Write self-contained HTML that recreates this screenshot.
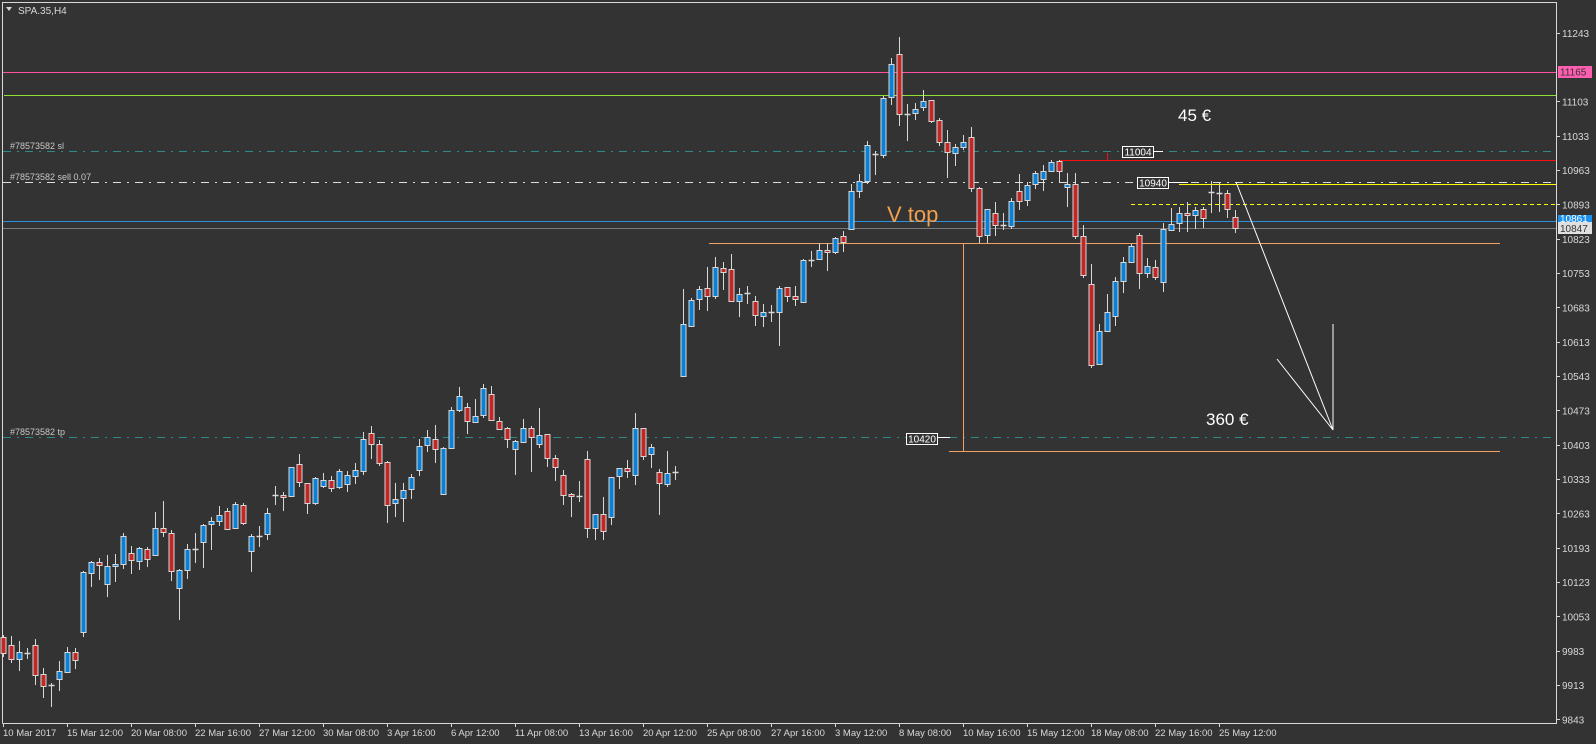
<!DOCTYPE html>
<html><head><meta charset="utf-8">
<style>
html,body{margin:0;padding:0;background:#333333;width:1596px;height:744px;overflow:hidden}
svg{display:block}
text{font-family:"Liberation Sans",sans-serif}
</style></head>
<body>
<svg id="c" width="1596" height="744" xmlns="http://www.w3.org/2000/svg">
<rect width="1596" height="744" fill="#333333"/>
<!-- frame -->
<path d="M2.5 723.5 V2.5 H1556.5 V723.5 H2.5" fill="none" stroke="#d8d8d8" stroke-width="1"/>
<!-- title -->
<path d="M6 7 L12 7 L9 11 Z" fill="#d8d8d8"/>
<text x="18" y="14" font-size="10" fill="#d8d8d8">SPA.35,H4</text>
<!-- horizontal lines -->
<line x1="3" y1="72.5" x2="1556" y2="72.5" stroke="#ff4fa0" stroke-width="1"/>
<line x1="4" y1="95.5" x2="1556" y2="95.5" stroke="#8fe030" stroke-width="1"/>
<line x1="3" y1="151.5" x2="1556" y2="151.5" stroke="#2e8a8a" stroke-width="1" stroke-dasharray="8,6,2,6"/>
<line x1="3" y1="182.5" x2="1556" y2="182.5" stroke="#dddddd" stroke-width="1" stroke-dasharray="8,6,2,6"/>
<line x1="3" y1="437.5" x2="1556" y2="437.5" stroke="#2e8a8a" stroke-width="1" stroke-dasharray="8,6,2,6"/>
<line x1="1059" y1="160.5" x2="1556" y2="160.5" stroke="#ff1010" stroke-width="1"/>
<line x1="1107.5" y1="153" x2="1107.5" y2="160" stroke="#ff1010" stroke-width="1"/>
<line x1="1179" y1="184.5" x2="1556" y2="184.5" stroke="#ffff00" stroke-width="1"/>
<line x1="1131" y1="204.5" x2="1556" y2="204.5" stroke="#ffff00" stroke-width="1" stroke-dasharray="4,3"/>
<line x1="3" y1="221.5" x2="1556" y2="221.5" stroke="#2a90e0" stroke-width="1"/>
<line x1="3" y1="228.5" x2="1556" y2="228.5" stroke="#7a7a7a" stroke-width="1"/>
<line x1="709" y1="243.5" x2="1500" y2="243.5" stroke="#f0a060" stroke-width="1"/>
<line x1="963.5" y1="243" x2="963.5" y2="451" stroke="#f0a060" stroke-width="1"/>
<line x1="949" y1="451.5" x2="1500" y2="451.5" stroke="#f0a060" stroke-width="1"/>
<!-- left labels -->
<text x="10" y="149" font-size="9" fill="#c8c8c8">#78573582 sl</text>
<text x="10" y="180" font-size="9" fill="#c8c8c8">#78573582 sell 0.07</text>
<text x="10" y="435" font-size="9" fill="#c8c8c8">#78573582 tp</text>
<g id="candles"></g>
<!-- price boxes -->
<line x1="1153" y1="151.5" x2="1163" y2="151.5" stroke="#fff"/>
<rect x="1122.5" y="146.5" width="31" height="11" fill="#333" stroke="#fff"/>
<text x="1138" y="155.5" font-size="10" fill="#fff" text-anchor="middle">11004</text>
<line x1="1169" y1="182.5" x2="1188" y2="182.5" stroke="#fff"/>
<rect x="1137.5" y="177.5" width="31" height="11" fill="#333" stroke="#fff"/>
<text x="1153" y="186.5" font-size="10" fill="#fff" text-anchor="middle">10940</text>
<line x1="938" y1="437.5" x2="950" y2="437.5" stroke="#fff"/>
<rect x="906.5" y="433.5" width="31" height="11" fill="#333" stroke="#fff"/>
<text x="922" y="442.5" font-size="10" fill="#fff" text-anchor="middle">10420</text>
<!-- annotations -->
<text x="887" y="222" font-size="22" fill="#f0a050">V top</text>
<text x="1178" y="121" font-size="17" fill="#ffffff">45 €</text>
<text x="1206" y="425" font-size="17" fill="#ffffff">360 €</text>
<polyline points="1236,182 1333,430 1277,359" fill="none" stroke="#ffffff" stroke-width="1"/>
<line x1="1333" y1="430" x2="1333" y2="324" stroke="#ffffff" stroke-width="1"/>
<g id="axis"></g>
<!-- right tags -->
<rect x="1558" y="66" width="34" height="12" fill="#ff5fb0"/>
<text x="1560" y="75.5" font-size="10" fill="#333">11165</text>
<rect x="1558" y="215" width="34" height="9" fill="#1a90f0"/>
<text x="1560" y="222" font-size="10" fill="#fff">10861</text>
<rect x="1558" y="222" width="34" height="12" fill="#e0e0e0"/>
<text x="1560" y="232" font-size="10" fill="#333">10847</text>
</svg>
<script>
var D=[
"r 637 653 635 657","r 645 659 636 663","b 652 659 641 671","d 653 653 648 659","r 645 675 639 685","r 674 686 668 698","d 685 685 683 707","b 671 679 661 691","b 652 672 647 673","r 652 660 648 669",
"b 572 632 571 637","b 562 573 561 587","r 562 565 558 580","b 566 584 555 597","b 564 566 554 582","b 536 564 533 569","r 553 560 546 574","b 548 561 547 570","r 549 559 547 567","b 528 555 512 555",
"r 528 532 501 537","r 533 571 530 581","b 570 588 569 620","b 549 570 544 579","d 549 549 533 563","b 525 542 524 568","b 521 524 517 550","b 515 521 506 526","r 511 529 508 530","b 504 528 502 528",
"r 505 523 503 525","b 536 551 534 572","d 536 536 526 547","b 513 534 508 540","d 495 495 486 505","r 495 497 492 511","b 467 496 467 497","r 464 482 454 487","r 483 503 483 514","b 478 503 477 505",
"b 480 486 473 488","r 480 488 476 492","b 471 487 469 489","b 475 484 471 492","b 470 476 463 484","b 439 471 432 475","r 433 444 426 459","r 444 463 440 466","r 462 505 461 523","b 499 503 483 517",
"b 490 498 483 522","b 477 489 474 499","b 446 470 439 476","b 437 445 430 452","r 439 449 425 463","b 448 494 447 494","b 410 448 407 448","b 396 410 387 412","r 407 421 403 434","b 416 422 399 423",
"b 388 415 384 418","r 394 420 386 420","r 421 429 417 430","r 428 439 427 448","b 441 449 440 475","b 428 442 419 443","r 428 437 426 472","b 435 444 408 448","r 434 458 434 467","r 458 467 455 481",
"r 475 495 470 505","r 494 496 493 517","d 496 496 481 502","r 459 528 451 538","b 514 528 514 540","r 514 531 497 540","b 477 517 477 525","b 468 476 468 489","r 468 471 460 478","b 428 475 413 485",
"r 428 456 428 460","b 447 454 444 468","r 472 483 469 515","b 473 484 451 487","d 472 472 466 480","b 324 376 289 376","b 300 326 298 327","b 289 299 286 310","r 288 296 267 311","b 267 296 257 299",
"r 268 272 262 290","r 269 301 254 302","b 294 301 288 317","d 293 293 286 304","r 301 315 296 326","b 312 316 304 327","d 312 312 305 322","b 288 312 286 346","r 287 296 287 302","r 296 299 286 306",
"b 260 302 259 303","d 260 260 251 267","b 250 259 243 260","r 250 252 243 271","b 238 252 237 254","r 236 242 231 252","b 191 229 184 230","b 181 191 174 198","b 145 181 141 184","d 154 154 151 175",
"b 98 155 96 158","b 64 97 58 105","r 54 114 37 126","d 114 114 104 141","b 109 113 103 120","b 101 107 90 111","r 100 121 100 123","r 120 142 118 146","r 142 152 130 178","b 147 153 144 166",
"b 142 147 135 150","r 137 188 127 192","r 188 236 187 243","b 209 235 209 243","r 213 225 202 236","d 225 225 213 230","b 201 226 198 229","r 191 201 174 210","b 185 200 182 206","b 173 184 171 189",
"b 171 179 165 191","b 162 171 160 172","r 161 171 160 182","b 184 187 173 207","r 184 236 173 239","r 236 275 225 278","r 284 365 264 368","b 331 364 324 364","b 312 331 294 331","b 281 316 277 326",
"b 262 281 257 293","b 246 262 244 263","r 235 273 233 289","b 266 273 258 278","r 267 277 260 280","b 229 282 223 292","b 224 230 208 230","b 213 223 207 232","r 213 215 202 232","b 210 215 207 229",
"r 209 218 207 228","d 192 192 181 213","d 193 193 183 212","r 193 209 190 218","r 217 228 210 233"];
var s="";
for(var i=0;i<D.length;i++){var p=D[i].split(" ");var x=3+8*i+0.5;var t=+p[1],b=+p[2],h=+p[3],l=+p[4];
s+='<line x1="'+x+'" y1="'+h+'" x2="'+x+'" y2="'+l+'" stroke="#d8d8d8" stroke-width="1"/>';
if(p[0]=="d"){s+='<line x1="'+(x-3)+'" y1="'+(t+0.5)+'" x2="'+(x+3)+'" y2="'+(t+0.5)+'" stroke="#d8d8d8" stroke-width="1.5"/>';}
else{var f=p[0]=="b"?"#0a80d8":"#c42626";s+='<rect x="'+(x-2.5)+'" y="'+(t+0.5)+'" width="5" height="'+Math.max(b-t,2)+'" fill="'+f+'" stroke="#d8d8d8" stroke-width="1"/>';}}
document.getElementById("candles").innerHTML=s;
var a="";
for(var k=0;k<=20;k++){var p=11243-70*k;if(p==11173)continue;var y=33.3+(11243-p)*0.4905;
a+='<line x1="1556" y1="'+(y|0)+'.5" x2="1560" y2="'+(y|0)+'.5" stroke="#d8d8d8"/>';
a+='<text x="1562" y="'+(y+3.5)+'" font-size="10" fill="#d8d8d8">'+p+'</text>';}
var L=["10 Mar 2017","15 Mar 12:00","20 Mar 08:00","22 Mar 16:00","27 Mar 12:00","30 Mar 08:00","3 Apr 16:00","6 Apr 12:00","11 Apr 08:00","13 Apr 16:00","20 Apr 12:00","25 Apr 08:00","27 Apr 16:00","3 May 12:00","8 May 08:00","10 May 16:00","15 May 12:00","18 May 08:00","22 May 16:00","25 May 12:00"];
for(var k=0;k<L.length;k++){var x=3+64*k;a+='<line x1="'+(x+0.5)+'" y1="723" x2="'+(x+0.5)+'" y2="727" stroke="#d8d8d8"/>';
a+='<text x="'+x+'" y="736" font-size="9.5" fill="#d8d8d8">'+L[k]+'</text>';}
document.getElementById("axis").innerHTML=a;
</script>
</body></html>
